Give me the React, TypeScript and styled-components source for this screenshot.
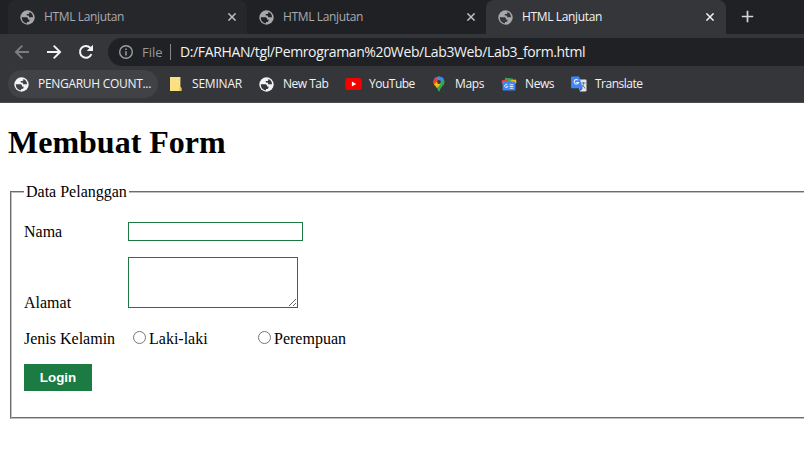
import React from "react";
import styled, { createGlobalStyle } from "styled-components";

const GlobalStyle = createGlobalStyle`
  * { box-sizing: border-box; }
  html, body { margin: 0; padding: 0; background: #fff; }
  body { width: 804px; height: 456px; overflow: hidden; }
  svg { display: block; flex: none; }
`;

const Window = styled.div`
  width: 804px;
  height: 456px;
  overflow: hidden;
  display: flex;
  flex-direction: column;
`;

const Chrome = styled.header`
  flex: none;
  height: 103px;
  background: #35363a;
  border-bottom: 1px solid #4b4c4f;
  font-family: "Open Sans", "Noto Sans", sans-serif;
`;

const TabStrip = styled.div`
  height: 34px;
  background: #202124;
  display: flex;
  padding-left: 8px;
`;

const Tab = styled.div<{ $state: "active" | "hover" | "idle" }>`
  width: ${(p) => (p.$state === "active" ? 240 : 239)}px;
  height: 34px;
  display: flex;
  align-items: center;
  padding: 0 ${(p) => (p.$state === "active" ? 12 : 11)}px 0 12px;
  border-radius: 8px 8px 0 0;
  color: ${(p) => (p.$state === "active" ? "#f1f3f4" : "#a9acb1")};
  background: ${(p) =>
    p.$state === "active" ? "#35363a" : p.$state === "hover" ? "#26272b" : "#202124"};
`;

const TabTitle = styled.span<{ $spacing: number }>`
  flex: 1;
  margin-left: 9px;
  font-size: 12px;
  line-height: 16px;
  white-space: nowrap;
  letter-spacing: ${(p) => p.$spacing}px;
`;

const Divider = styled.span`
  width: 1px;
  height: 20px;
  margin: 7px -1px 0 0;
  background: #45474b;
`;

const NewTabButton = styled.div`
  margin: 10px 0 0 15px;
`;

const Toolbar = styled.div`
  height: 36px;
  display: flex;
  align-items: center;
  padding-left: 14px;
`;

const NavIcons = styled.div`
  display: flex;
  gap: 16px;
  width: 94px;
`;

const AddressBar = styled.div`
  flex: 1;
  height: 28px;
  border-radius: 14px 0 0 14px;
  background: #202124;
  display: flex;
  align-items: center;
  padding-left: 10px;
  font-size: 14px;
  line-height: 20px;
`;

const Scheme = styled.span`
  margin-left: 8px;
  width: 28px;
  color: #96999e;
  font-size: 13px;
  letter-spacing: 0;
`;

const AddressRule = styled.span`
  width: 1px;
  height: 16px;
  background: #84878b;
`;

const Url = styled.span`
  margin-left: 9px;
  color: #f1f3f4;
  white-space: nowrap;
  letter-spacing: -0.37px;
`;

const Bookmarks = styled.div`
  height: 28px;
  display: flex;
  padding-left: 8px;
`;

const Bookmark = styled.div<{ $width: number; $gap?: number; $hover?: boolean }>`
  width: ${(p) => p.$width}px;
  height: 28px;
  margin-right: ${(p) => p.$gap ?? 0}px;
  padding-left: 6px;
  display: flex;
  align-items: center;
  border-radius: 14px;
  background: ${(p) => (p.$hover ? "#414246" : "transparent")};
`;

const IconSlot = styled.span`
  width: 24px;
  flex: none;
`;

const BookmarkLabel = styled.span<{ $spacing: number }>`
  font-size: 12px;
  line-height: 16px;
  color: #f1f3f4;
  white-space: nowrap;
  letter-spacing: ${(p) => p.$spacing}px;
`;

const Page = styled.main`
  flex: 1;
  padding: 21px 0 0 8px;
  background: #fff;
  color: #000;
  font-family: "Liberation Serif", "Times New Roman", serif;
  font-size: 16px;
  line-height: 18px;
`;

const Heading = styled.h1`
  margin: 0;
  font-size: 32px;
  line-height: 37px;
  font-weight: bold;
`;

const Fieldset = styled.fieldset`
  width: 830px;
  height: 236px;
  margin: 22px 0 0 2px;
  border: 2px groove #c0c0c0;
  padding: 0 12px;
`;

const Legend = styled.legend`
  padding: 0 2px;
  line-height: 18px;
`;

const Row = styled.div<{ $height: number; $top: number }>`
  display: flex;
  align-items: flex-end;
  height: ${(p) => p.$height}px;
  margin-top: ${(p) => p.$top}px;
`;

const Label = styled.label`
  width: 104px;
  flex: none;
`;

const TextInput = styled.input`
  width: 175px;
  height: 19px;
  padding: 0;
  border: 1px solid #1d7844;
  background: #fff;
`;

const TextArea = styled.textarea`
  width: 170px;
  height: 51px;
  margin: 0;
  align-self: flex-start;
  border: 1px solid #1d7844;
  background: #fff;
  resize: both;
`;

const Choice = styled.label<{ $width: number }>`
  width: ${(p) => p.$width}px;
  display: flex;
  align-items: center;
  white-space: nowrap;
`;

const Radio = styled.input`
  width: 13px;
  height: 13px;
  margin: 0 3px 3px 5px;
`;

const LoginButton = styled.button`
  display: block;
  width: 68px;
  height: 27px;
  margin-top: 16px;
  padding: 0;
  border: 0;
  background: #1b7b43;
  color: #fff;
  font: bold 13.333px "Liberation Sans", Arial, sans-serif;
`;

const Globe = ({ color, ink }: { color: string; ink: string }) => (
  <svg width="15" height="15" viewBox="0 0 15 15">
    <circle cx="7.5" cy="7.5" r="7.2" fill={color} />
    <path
      d="M1.800 7.200h4.300c1.200 0 1.900.6 1.900 1.600v.6h1.500v1.200c0 .8-.5 1.300-1.300 1.300H7v1.300C4 13.200 1.800 10.800 1.800 7.200z"
      fill={ink}
    />
    <path
      d="M9.300 2v1c0 .6-.4 1-1 1H6.800v1.500h1.400c.5 0 .9.400.9.900v.8h3.900C13.100 4.800 11.700 2.700 9.300 2z"
      fill={ink}
    />
  </svg>
);

const Close = ({ color }: { color: string }) => (
  <svg width="8" height="8" viewBox="0 0 8 8">
    <path d="M.4.4l7.200 7.200M7.600.4L.4 7.600" stroke={color} strokeWidth="1.500" fill="none" />
  </svg>
);

const Back = ({ color, flip }: { color: string; flip?: boolean }) => (
  <svg width="16" height="16" viewBox="0 0 16 16">
    <path
      d="M15 8H2.200M8.300 1.600L1.900 8l6.400 6.400"
      transform={flip ? "translate(16 0) scale(-1 1)" : undefined}
      stroke={color}
      strokeWidth="1.900"
      fill="none"
    />
  </svg>
);

const Reload = () => (
  <svg width="16" height="16" viewBox="0 0 16 16">
    <path d="M13.400 10.100A5.900 5.900 0 1 1 12.200 3.800L14 5.600" stroke="#f1f3f4" strokeWidth="2" fill="none" />
    <path d="M15 .8v6.300H8.700z" fill="#f1f3f4" />
  </svg>
);

const Info = () => (
  <svg width="16" height="16" viewBox="0 0 16 16">
    <circle cx="8" cy="8" r="6.300" fill="none" stroke="#9aa0a6" strokeWidth="1.400" />
    <path d="M8 7.200v4.200M8 4.500v1.600" stroke="#9aa0a6" strokeWidth="1.500" />
  </svg>
);

const Note = () => (
  <svg width="14" height="16" viewBox="0 0 14 16">
    <path d="M2 1h10.400v10l1 .8V15H2z" fill="#fbe182" />
    <path d="M11.200 11.400l2.200.5V15h-2.200z" fill="#efc64c" />
  </svg>
);

const YouTube = () => (
  <svg width="17" height="12" viewBox="0 0 17 12">
    <rect x=".2" width="16.600" height="12" rx="3" fill="#f60000" />
    <path d="M6.900 3.500v5l4.300-2.500z" fill="#fff" />
  </svg>
);

const PinIcon = styled.svg`
  margin-left: 2px;
`;

const MapsPin = () => (
  <PinIcon width="12" height="16" viewBox="0 0 12 16">
    <defs>
      <clipPath id="pin">
        <path d="M6 .5a5.500 5.500 0 0 0-5.500 5.500c0 3.300 3.700 4.800 4.700 8.700.2 1.100 1.400 1.100 1.600 0C7.800 10.800 11.500 9.300 11.500 6A5.500 5.500 0 0 0 6 .5z" />
      </clipPath>
    </defs>
    <g clipPath="url(#pin)">
      <path d="M0 0h12v16H0z" fill="#34a853" />
      <path d="M0 9.800L12 3V0H0z" fill="#4285f4" />
      <path d="M0 2l3-2 3 6-6 6z" fill="#ea4335" />
      <path d="M0 9.500L4.500 5 8 7.500 3 13z" fill="#fbbc04" />
    </g>
    <circle cx="6" cy="6" r="1.900" fill="#35363a" />
  </PinIcon>
);

const News = () => (
  <svg width="16" height="14" viewBox="0 0 16 14">
    <path d="M4 .7l8.500 1V6H4z" fill="#34a853" />
    <path d="M.6 3.500L6 2l2 4-7 1z" fill="#ea4335" />
    <path d="M9 3.500l6-1 .5 3L14 7z" fill="#fbbc04" />
    <rect x="1.600" y="4.500" width="12.800" height="9" rx="1" fill="#4285f4" />
    <path d="M6.500 8a1.600 1.600 0 1 0 .3 1.400H5.200M8.700 7.700h3.600M8.700 9.500h3.600M8.700 11.300h3.600" fill="none" stroke="#dce8fc" />
  </svg>
);

const Translate = () => (
  <svg width="16" height="16" viewBox="0 0 16 16">
    <path d="M6 3.500h8.600c.6 0 .9.400.9.900v10.200c0 .5-.4.900-.9.900H9z" fill="#e2e4e8" />
    <path d="M.9.500h7.200l3.700 11.700H.9a.8.800 0 0 1-.8-.8V1.300C.1.900.5.500.9.500z" fill="#4285f4" />
    <path d="M8.500 12.200h3.300L9.500 15z" fill="#2a56c6" />
    <path d="M7 4.200a2.200 2.200 0 1 0 .5 2.300H5.200" stroke="#eef3ff" strokeWidth="1.100" fill="none" />
    <path d="M10.500 7h4M12.500 6v1c0 2-.7 3-2 4.200M11.500 9l2.700 3.500" stroke="#68768b" strokeWidth="1" fill="none" />
  </svg>
);

export default function App() {
  return (
    <>
      <GlobalStyle />
      <Window>
        <Chrome>
          <TabStrip>
            <Tab $state="hover">
              <Globe color="#a5a7aa" ink="#26272b" />
              <TabTitle $spacing={-0.36}>HTML Lanjutan</TabTitle>
              <Close color="#bdc1c6" />
            </Tab>
            <Divider />
            <Tab $state="idle">
              <Globe color="#a5a7aa" ink="#202124" />
              <TabTitle $spacing={-0.36}>HTML Lanjutan</TabTitle>
              <Close color="#bdc1c6" />
            </Tab>
            <Tab $state="active">
              <Globe color="#a5a7aa" ink="#35363a" />
              <TabTitle $spacing={-0.36}>HTML Lanjutan</TabTitle>
              <Close color="#f1f3f4" />
            </Tab>
            <NewTabButton>
              <svg width="13" height="13" viewBox="0 0 13 13">
                <path d="M6.500.8v11.400M.8 6.500h11.400" stroke="#d5d7da" strokeWidth="1.700" />
              </svg>
            </NewTabButton>
          </TabStrip>
          <Toolbar>
            <NavIcons>
              <Back color="#7c7d81" />
              <Back color="#f1f3f4" flip />
              <Reload />
            </NavIcons>
            <AddressBar>
              <Info />
              <Scheme>File</Scheme>
              <AddressRule />
              <Url>D:/FARHAN/tgl/Pemrograman%20Web/Lab3Web/Lab3_form.html</Url>
            </AddressBar>
          </Toolbar>
          <Bookmarks>
            <Bookmark $width={150} $gap={4} $hover>
              <IconSlot><Globe color="#f1f3f4" ink="#414246" /></IconSlot>
              <BookmarkLabel $spacing={-0.3}>PENGARUH COUNT...</BookmarkLabel>
            </Bookmark>
            <Bookmark $width={91}>
              <IconSlot><Note /></IconSlot>
              <BookmarkLabel $spacing={-0.2}>SEMINAR</BookmarkLabel>
            </Bookmark>
            <Bookmark $width={86}>
              <IconSlot><Globe color="#f1f3f4" ink="#35363a" /></IconSlot>
              <BookmarkLabel $spacing={-0.5}>New Tab</BookmarkLabel>
            </Bookmark>
            <Bookmark $width={86}>
              <IconSlot><YouTube /></IconSlot>
              <BookmarkLabel $spacing={-0.5}>YouTube</BookmarkLabel>
            </Bookmark>
            <Bookmark $width={70}>
              <IconSlot><MapsPin /></IconSlot>
              <BookmarkLabel $spacing={-0.35}>Maps</BookmarkLabel>
            </Bookmark>
            <Bookmark $width={70}>
              <IconSlot><News /></IconSlot>
              <BookmarkLabel $spacing={-0.4}>News</BookmarkLabel>
            </Bookmark>
            <Bookmark $width={90}>
              <IconSlot><Translate /></IconSlot>
              <BookmarkLabel $spacing={-0.5}>Translate</BookmarkLabel>
            </Bookmark>
          </Bookmarks>
        </Chrome>
        <Page>
          <Heading>Membuat Form</Heading>
          <Fieldset>
            <Legend>Data Pelanggan</Legend>
            <Row $height={19} $top={21}>
              <Label htmlFor="nama">Nama</Label>
              <TextInput id="nama" />
            </Row>
            <Row $height={55} $top={16}>
              <Label htmlFor="alamat">Alamat</Label>
              <TextArea id="alamat" />
            </Row>
            <Row $height={18} $top={18}>
              <Label as="span">Jenis Kelamin</Label>
              <Choice $width={125}><Radio type="radio" name="jk" />Laki-laki</Choice>
              <Choice $width={110}><Radio type="radio" name="jk" />Perempuan</Choice>
            </Row>
            <LoginButton type="button">Login</LoginButton>
          </Fieldset>
        </Page>
      </Window>
    </>
  );
}
